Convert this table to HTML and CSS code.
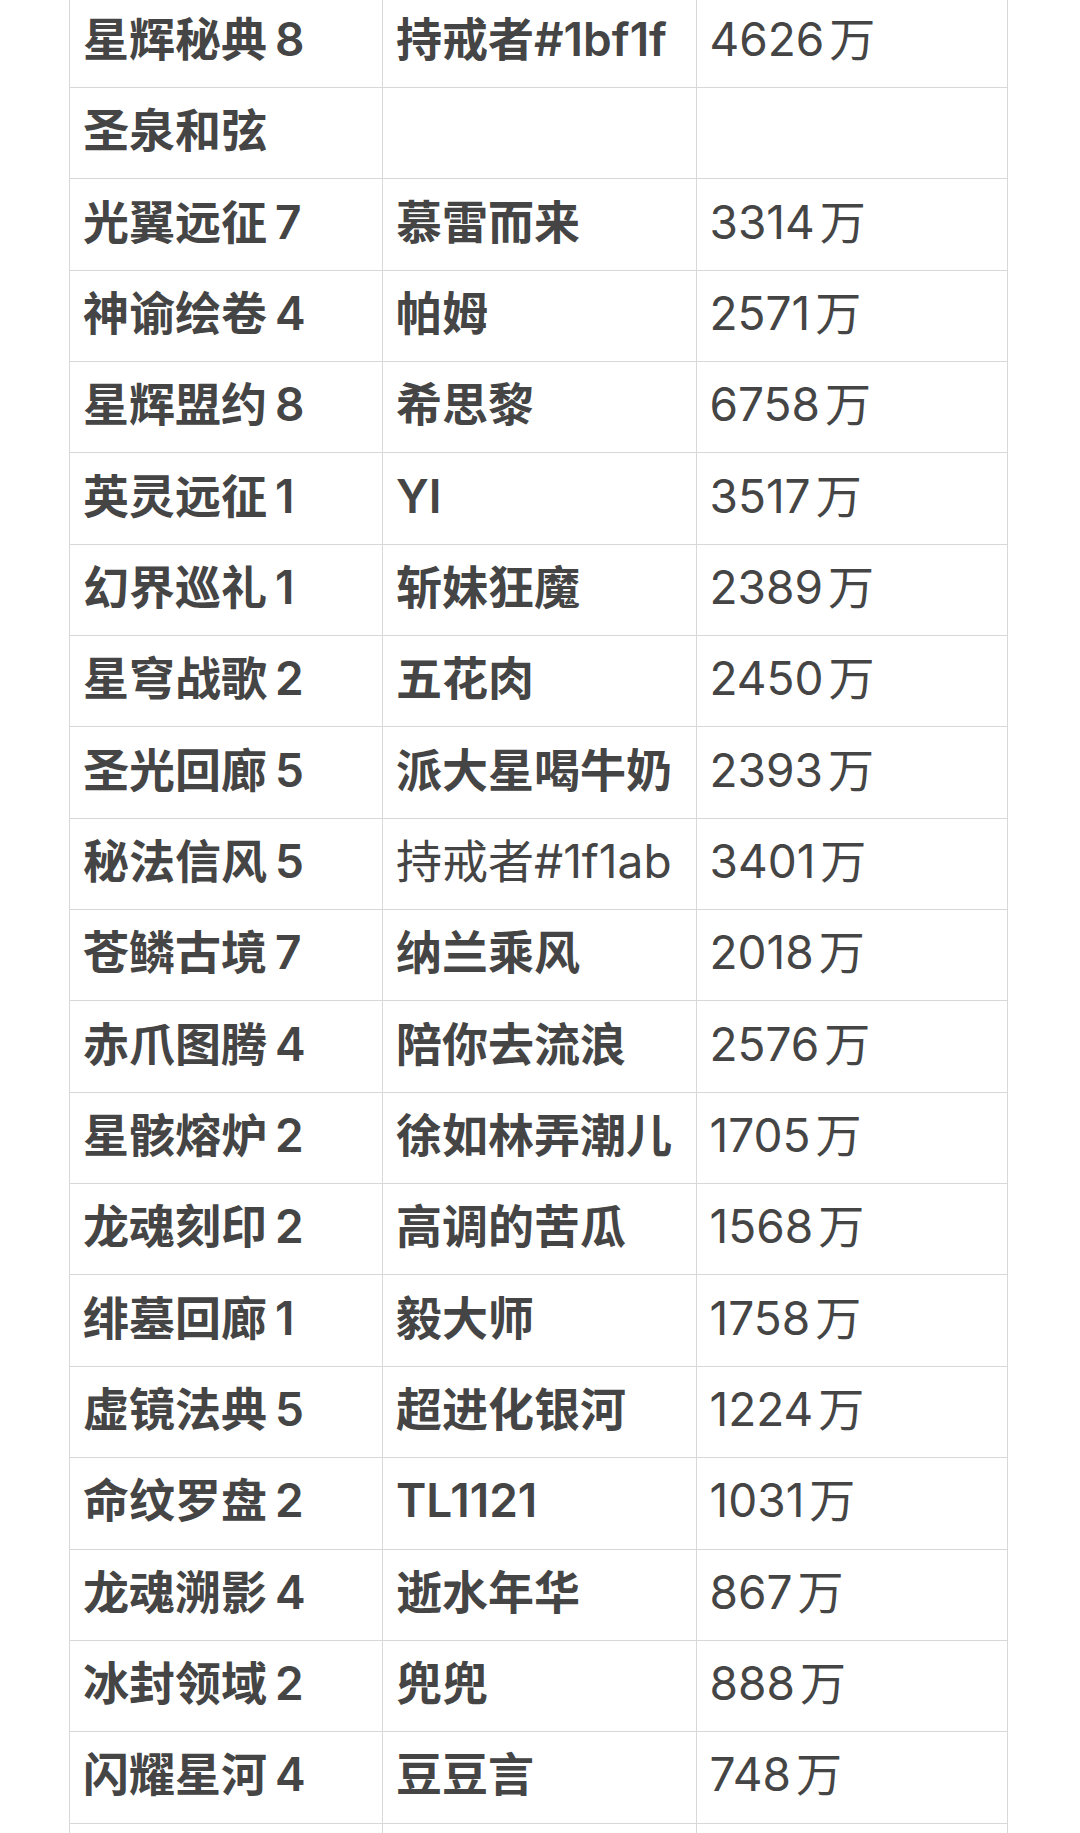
FILE: index.html
```
<!DOCTYPE html>
<html lang="zh-CN">
<head>
<meta charset="utf-8">
<link rel="stylesheet" href="styles.css">
</head>
<body>
<div class="table">
  <div class="c b">星辉秘典<span class="d">8</span></div><div class="c b">持戒者#1bf1f</div><div class="c">4626<span class="w">万</span></div>
  <div class="c b">圣泉和弦</div><div class="c b"></div><div class="c"></div>
  <div class="c b">光翼远征<span class="d">7</span></div><div class="c b">慕雷而来</div><div class="c">3314<span class="w">万</span></div>
  <div class="c b">神谕绘卷<span class="d">4</span></div><div class="c b">帕姆</div><div class="c">2571<span class="w">万</span></div>
  <div class="c b">星辉盟约<span class="d">8</span></div><div class="c b">希思黎</div><div class="c">6758<span class="w">万</span></div>
  <div class="c b">英灵远征<span class="d">1</span></div><div class="c b">YI</div><div class="c">3517<span class="w">万</span></div>
  <div class="c b">幻界巡礼<span class="d">1</span></div><div class="c b">斩妹狂魔</div><div class="c">2389<span class="w">万</span></div>
  <div class="c b">星穹战歌<span class="d">2</span></div><div class="c b">五花肉</div><div class="c">2450<span class="w">万</span></div>
  <div class="c b">圣光回廊<span class="d">5</span></div><div class="c b">派大星喝牛奶</div><div class="c">2393<span class="w">万</span></div>
  <div class="c b">秘法信风<span class="d">5</span></div><div class="c">持戒者#1f1ab</div><div class="c">3401<span class="w">万</span></div>
  <div class="c b">苍鳞古境<span class="d">7</span></div><div class="c b">纳兰乘风</div><div class="c">2018<span class="w">万</span></div>
  <div class="c b">赤爪图腾<span class="d">4</span></div><div class="c b">陪你去流浪</div><div class="c">2576<span class="w">万</span></div>
  <div class="c b">星骸熔炉<span class="d">2</span></div><div class="c b">徐如林弄潮儿</div><div class="c">1705<span class="w">万</span></div>
  <div class="c b">龙魂刻印<span class="d">2</span></div><div class="c b">高调的苦瓜</div><div class="c">1568<span class="w">万</span></div>
  <div class="c b">绯墓回廊<span class="d">1</span></div><div class="c b">毅大师</div><div class="c">1758<span class="w">万</span></div>
  <div class="c b">虚镜法典<span class="d">5</span></div><div class="c b">超进化银河</div><div class="c">1224<span class="w">万</span></div>
  <div class="c b">命纹罗盘<span class="d">2</span></div><div class="c b">TL1121</div><div class="c">1031<span class="w">万</span></div>
  <div class="c b">龙魂溯影<span class="d">4</span></div><div class="c b">逝水年华</div><div class="c">867<span class="w">万</span></div>
  <div class="c b">冰封领域<span class="d">2</span></div><div class="c b">兜兜</div><div class="c">888<span class="w">万</span></div>
  <div class="c b">闪耀星河<span class="d">4</span></div><div class="c b">豆豆言</div><div class="c">748<span class="w">万</span></div>
  <div class="c b"></div><div class="c b"></div><div class="c"></div>
</div>
</body>
</html>
```
FILE: styles.css
```
html, body {
  margin: 0;
  padding: 0;
  background: #ffffff;
}
body {
  overflow: hidden;
}
.table {
  display: grid;
  grid-template-columns: 313px 313.5px 311.5px;
  grid-auto-rows: 91.35px;
  margin: -3.35px 0 0 69px;
  width: 939px;
  border-left: 1px solid #d8d8d8;
  font-family: "Inter", "Noto Sans CJK SC", sans-serif;
  font-size: 46px;
  color: #454545;
}
.c {
  box-sizing: border-box;
  display: flex;
  align-items: center;
  padding: 0 0 6px 13px;
  border-right: 1px solid #d8d8d8;
  border-bottom: 1px solid #d8d8d8;
  white-space: nowrap;
  line-height: 1;
  font-weight: 400;
}
.b {
  font-weight: 600;
}
.d {
  margin-left: 8px;
}
.w {
  margin-left: 5px;
}
```
